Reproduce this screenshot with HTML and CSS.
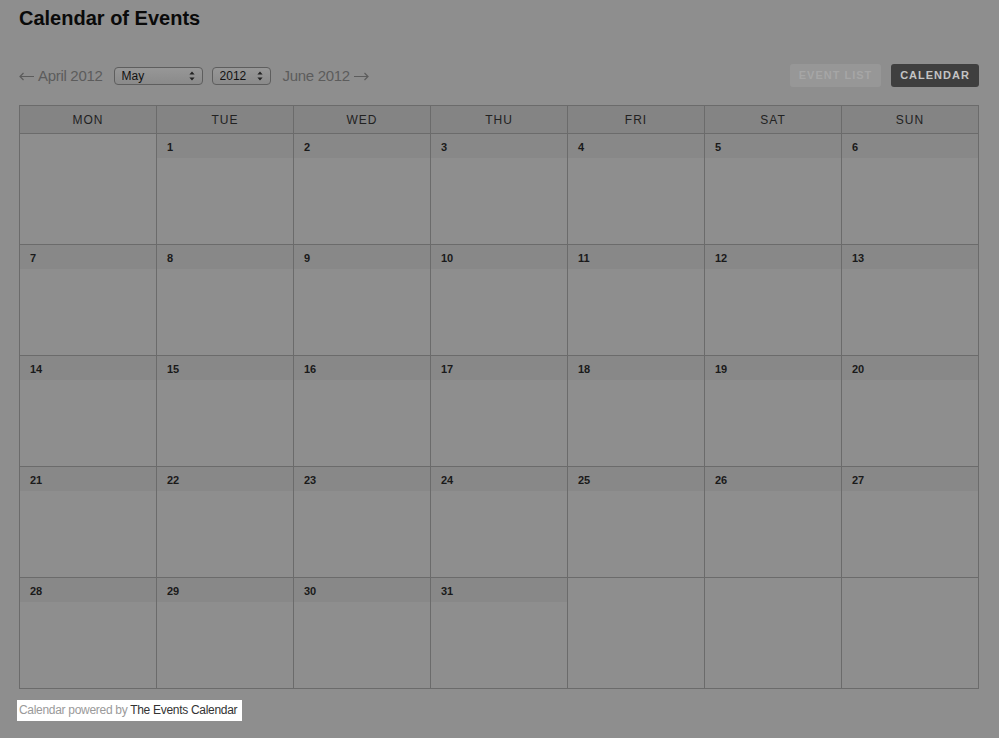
FILE: index.html
```html
<!DOCTYPE html>
<html lang="en">
  <head>
    <meta charset="UTF-8" />
    <meta name="viewport" content="width=device-width, initial-scale=1.0" />
    <title>Calendar of Events</title>
    <link rel="stylesheet" href="styles.css">
  </head>
  <body>
    <div id="page">
      <h1 id="title">Calendar of Events</h1>

      <div id="nav-bar">
        <div class="month-nav">
          <a class="month-link" href="#">
            <svg class="nav-arrow" width="15" height="9" viewBox="0 0 15 9"><path d="M1 4.5H15 M4.5 1L1 4.5L4.5 8" fill="none" stroke="#5c5c5c" stroke-width="1.2"/></svg>
            April 2012
          </a>
          <span class="select-wrap select-month">
            <select>
              <option>January</option><option>February</option><option>March</option>
              <option>April</option><option selected>May</option><option>June</option>
              <option>July</option><option>August</option><option>September</option>
              <option>October</option><option>November</option><option>December</option>
            </select>
            <svg class="arrows" width="6" height="10" viewBox="0 0 6 10"><path d="M3 0.5L5.6 3.6H0.4Z M3 9.5L5.6 6.4H0.4Z" fill="#222"/></svg>
          </span>
          <span class="select-wrap select-year">
            <select>
              <option>2011</option><option selected>2012</option><option>2013</option>
            </select>
            <svg class="arrows" width="6" height="10" viewBox="0 0 6 10"><path d="M3 0.5L5.6 3.6H0.4Z M3 9.5L5.6 6.4H0.4Z" fill="#222"/></svg>
          </span>
          <a class="month-link" href="#">
            June 2012
            <svg class="nav-arrow" width="15" height="9" viewBox="0 0 15 9"><path d="M0 4.5H14 M10.5 1L14 4.5L10.5 8" fill="none" stroke="#5c5c5c" stroke-width="1.2"/></svg>
          </a>
        </div>
        <div class="view-buttons">
          <a class="view-btn" id="list-btn" href="#">Event List</a>
          <a class="view-btn active" id="cal-btn" href="#">Calendar</a>
        </div>
      </div>

      <table id="calendar">
        <thead>
          <tr>
            <th>MON</th><th>TUE</th><th>WED</th><th>THU</th><th>FRI</th><th>SAT</th><th>SUN</th>
          </tr>
        </thead>
        <tbody id="cal-body"></tbody>
      </table>

      <p id="credit">
        <span class="credit-text">Calendar powered by </span><a href="#">The Events Calendar</a>
      </p>
    </div>

    <script>
      // Mai 2012 beginnt am Dienstag
      const firstOffset = 1;
      const daysInMonth = 31;
      const body = document.getElementById("cal-body");

      let day = 1 - firstOffset;
      for (let week = 0; week < 5; week++) {
        const row = document.createElement("tr");
        for (let d = 0; d < 7; d++) {
          const cell = document.createElement("td");
          if (day >= 1 && day <= daysInMonth) {
            const num = document.createElement("div");
            num.classList.add("day-num");
            num.textContent = day;
            cell.appendChild(num);
          }
          row.appendChild(cell);
          day++;
        }
        body.appendChild(row);
      }
    </script>
  </body>
</html>
```

FILE: styles.css
```css
* {
  margin: 0;
  padding: 0;
  box-sizing: border-box;
}

body {
  background-color: #8e8e8e;
  font-family: "Liberation Sans", Arial, sans-serif;
  color: #1a1a1a;
}

#page {
  padding: 6px 20px 0 19px;
  width: 999px;
}

#title {
  font-size: 20px;
  line-height: 24px;
  font-weight: bold;
  color: #0a0a0a;
}

#nav-bar {
  display: flex;
  justify-content: space-between;
  align-items: center;
  margin-top: 34px;
  height: 23px;
}

.month-nav {
  display: flex;
  align-items: center;
}

.month-link {
  display: flex;
  align-items: center;
  gap: 4px;
  font-size: 15px;
  color: #5c5c5c;
  text-decoration: none;
  letter-spacing: -0.3px;
}

.nav-arrow {
  margin-top: 1px;
}

.select-wrap {
  position: relative;
  display: inline-block;
  height: 18px;
  border: 1px solid #5e5e5e;
  border-radius: 4px;
  background: linear-gradient(#979797, #8a8a8a);
}

.select-month {
  width: 89px;
  margin: 0 9px 0 11px;
}

.select-year {
  width: 59px;
  margin-right: 12px;
}

.select-wrap select {
  appearance: none;
  -webkit-appearance: none;
  display: block;
  border: none;
  background: transparent;
  font-family: "Liberation Sans", Arial, sans-serif;
  font-size: 12px;
  line-height: 16px;
  color: #111;
  width: 100%;
  height: 16px;
  padding: 0 0 0 7px;
  outline: none;
}

.arrows {
  position: absolute;
  right: 7px;
  top: 3px;
}

.view-buttons {
  display: flex;
  gap: 10px;
}

.view-btn {
  display: block;
  height: 23px;
  line-height: 23px;
  padding: 0;
  border-radius: 3px;
  font-size: 11px;
  font-weight: bold;
  letter-spacing: 1px;
  text-transform: uppercase;
  text-align: center;
  white-space: nowrap;
  text-decoration: none;
}

#list-btn {
  width: 91px;
  background-color: #979797;
  color: #a6a6a6;
}

#cal-btn {
  width: 88px;
  background-color: #3f3f3f;
  color: #c4c4c4;
}

#calendar {
  margin-top: 18px;
  width: 960px;
  border-collapse: collapse;
  table-layout: fixed;
}

#calendar th {
  height: 28px;
  background-color: #848484;
  border: 1px solid #6b6b6b;
  font-size: 12px;
  font-weight: normal;
  letter-spacing: 1px;
  color: #222;
  text-align: center;
}

#calendar td {
  height: 111px;
  border: 1px solid #6b6b6b;
  vertical-align: top;
}

.day-num {
  height: 24px;
  background-color: #888888;
  padding: 7px 10px 0;
  font-size: 11px;
  font-weight: bold;
  color: #1a1a1a;
}

#credit {
  display: inline-block;
  margin: 11px 0 0 -2px;
  padding: 2px 5px 2px 2px;
  background-color: #ffffff;
  font-size: 12px;
  line-height: 17px;
  letter-spacing: -0.3px;
}

.credit-text {
  color: #9a9a9a;
}

#credit a {
  color: #333;
  text-decoration: none;
}
```
